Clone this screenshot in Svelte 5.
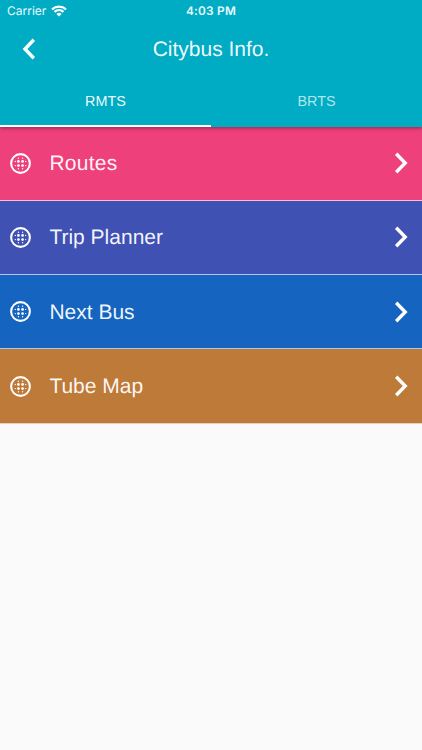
<script>
  const tabs = ['RMTS', 'BRTS'];
  let active = $state(0);
  const items = [
    { label: 'Routes', tone: 'pink' },
    { label: 'Trip Planner', tone: 'indigo' },
    { label: 'Next Bus', tone: 'blue' },
    { label: 'Tube Map', tone: 'brown' }
  ];
  const dots = [
    [10, 10, 1], [14, 10, 1], [10, 14, 1], [14, 14, 1],
    [7, 10, 0.5], [7, 14, 0.5], [17, 10, 0.5], [17, 14, 0.5],
    [10, 7, 0.5], [14, 7, 0.5], [10, 17, 0.5], [14, 17, 0.5]
  ];
</script>

<div class="screen">
  <header>
    <div class="status">
      <div class="carrier">
        <span>Carrier</span>
        <svg class="wifi" viewBox="0 0 16 12">
          <path d="M1 4.3C5 .6 11 .6 15 4.3" />
          <path d="M3.5 6.9c2.6-2.4 6.4-2.4 9 0" />
          <path class="tip" d="M8 11.5 5.4 8.9q2.6-2.1 5.2 0z" />
        </svg>
      </div>
      <span class="time">4:03 PM</span>
    </div>
    <div class="bar">
      <button class="back" aria-label="Back">
        <svg viewBox="0 0 14 22"><path d="M11.8 1.8 3 11l8.8 9.2" /></svg>
      </button>
      <h1>Citybus Info.</h1>
    </div>
    <nav>
      {#each tabs as tab, i}
        <button class="tab" class:active={active === i} onclick={() => (active = i)}>{tab}</button>
      {/each}
    </nav>
  </header>
  <main>
    {#each items as item}
      <div class="row {item.tone}">
        <svg class="globe" viewBox="0 0 24 24">
          <circle class="ring" cx="12" cy="12" r="9" />
          {#each dots as [x, y, r]}
            <circle cx={x} cy={y} r={r * 1.3} />
          {/each}
        </svg>
        <span class="label">{item.label}</span>
        <svg class="chevron" viewBox="0 0 14 22"><path d="m2.2 1.8 9 9.2-9 9.2" /></svg>
      </div>
    {/each}
  </main>
</div>

<style>
  :global(body) { margin: 0; }
  .screen {
    width: 100%;
    height: 750px;
    overflow: hidden;
    background: #fafafa;
    color: #fff;
    font-family: "Liberation Sans", Arial, sans-serif;
    text-rendering: geometricPrecision;
  }
  header {
    position: relative;
    height: 126.5px;
    display: flex;
    flex-direction: column;
    background: #00acc4;
    box-shadow: 0 1px 4px rgba(0, 0, 0, 0.4);
  }
  .status {
    height: 22px;
    display: grid;
    grid-template-columns: 1fr auto 1fr;
    align-items: center;
    font-family: Inter, sans-serif;
    font-size: 12px;
    line-height: 22px;
  }
  .carrier { display: flex; align-items: center; gap: 5px; padding-left: 7px; color: #e8fafc; }
  .wifi { width: 16px; height: 12px; fill: none; stroke: #fff; stroke-width: 2.3; }
  .wifi .tip { fill: #fff; stroke: none; }
  .time { font-weight: 600; font-size: 11.8px; letter-spacing: 0.25px; color: #e8fafc; }
  .bar {
    height: 54px;
    display: grid;
    grid-template-columns: 58px 1fr 58px;
    align-items: center;
  }
  button { border: 0; padding: 0; background: none; color: inherit; font: inherit; }
  .back { display: flex; padding-left: 22px; }
  .back svg { width: 14px; height: 22px; }
  .back path, .chevron path { fill: none; stroke: #fff; stroke-width: 3.4; }
  h1 {
    margin: 0;
    padding-top: 1px;
    text-align: center;
    font-size: 21px;
    line-height: 26px;
    font-weight: 400;
    color: rgba(255, 255, 255, 0.94);
  }
  nav { flex: 1; display: flex; }
  .tab {
    flex: 1;
    padding-top: 2px;
    border-bottom: 2px solid transparent;
    font-size: 14.4px;
    color: rgba(255, 255, 255, 0.7);
  }
  .tab.active { color: rgba(255, 255, 255, 0.95); border-color: #fff; }
  .row {
    box-sizing: border-box;
    height: 74.3px;
    display: flex;
    align-items: center;
    padding: 0 14px 0 8px;
    border-bottom: 1px solid rgba(255, 255, 255, 0.65);
  }
  .pink { background: #ee407b; }
  .indigo { background: #4051b4; }
  .blue { background: #1565c0; }
  .brown { background: #bd7a38; }
  .globe { width: 25px; height: 25px; fill: #fff; }
  .ring { fill: none; stroke: #fff; stroke-width: 2; }
  .label {
    flex: 1;
    margin-left: 16.4px;
    padding-top: 2px;
    font-size: 21px;
    line-height: 28px;
    color: rgba(255, 255, 255, 0.94);
  }
  .pink .label { letter-spacing: 0.25px; }
  .chevron { width: 14px; height: 22px; }
</style>
